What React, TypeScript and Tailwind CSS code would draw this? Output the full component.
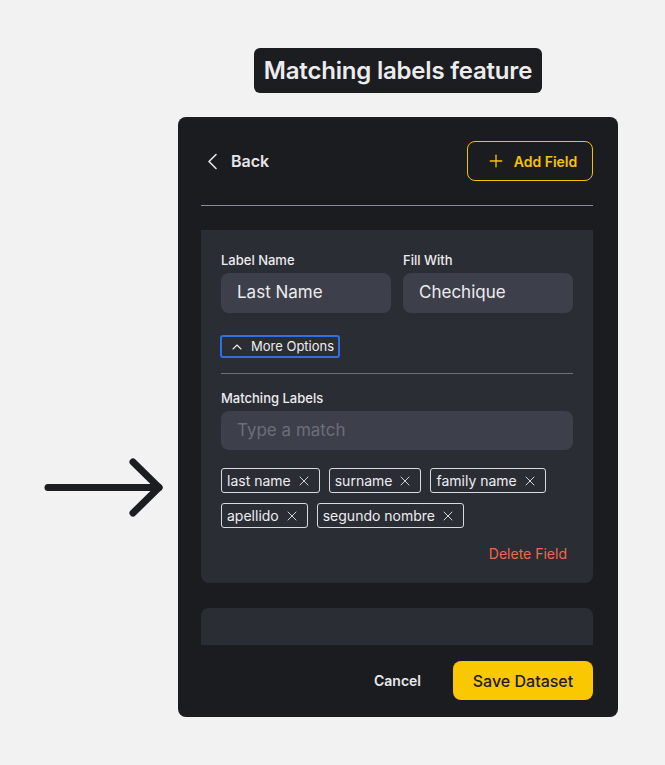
import { ChevronUp, Plus, X } from 'lucide-react';

const tagRows = [
  ['last name', 'surname', 'family name'],
  ['apellido', 'segundo nombre'],
];

function Tag({ label }: { label: string }) {
  return (
    <span className="flex h-[25px] items-center gap-[5px] rounded-[3px] border border-[#d9d9de] pl-[5px] pr-[7px] text-[14px] text-[#eeeef0]">
      {label}
      <X size={16} strokeWidth={1.3} />
    </span>
  );
}

export default function App() {
  return (
    <div
      className="min-h-screen bg-[#f2f2f2] flex items-start pl-[44px] pt-[48px]"
      style={{ fontFamily: 'Inter, "Noto Sans", sans-serif' }}
    >
      <div className="mt-[410px] w-[134px]">
        <svg width="122" height="60" viewBox="0 0 122 60" fill="none">
          <path d="M4 29.5H115" stroke="#1c1d21" strokeWidth="7" strokeLinecap="round" />
          <path d="M89 4L115 29.5L89 55" stroke="#1c1d21" strokeWidth="7" strokeLinecap="round" strokeLinejoin="round" />
        </svg>
      </div>

      <div className="flex flex-col items-center w-[440px]">
        <div className="h-[45px] rounded-md bg-[#1c1d21] px-[10px] flex items-center text-[24px] font-semibold tracking-[-0.2px] text-[#ececee]">
          Matching labels feature
        </div>

        <div className="mt-6 w-[440px] h-[600px] rounded-lg bg-[#1b1c20] pl-[23px] pr-[25px] pt-6 pb-[17px] flex flex-col">
          <div className="flex items-center justify-between h-10">
            <button className="flex items-center gap-[13px] pl-[6px] text-[16px] font-semibold text-[#e6e6ea]">
              <svg width="11" height="17" viewBox="0 0 11 17" fill="none">
                <path d="M9 1.5L2 8.5L9 15.5" stroke="currentColor" strokeWidth="1.6" strokeLinecap="round" strokeLinejoin="round" />
              </svg>
              Back
            </button>
            <button className="flex h-10 w-[126px] items-center justify-center gap-[8px] pl-[3px] rounded-lg border-[1.5px] border-[#f2c200] text-[14px] font-semibold text-[#f5c400]">
              <Plus size={20} strokeWidth={1.6} />
              Add Field
            </button>
          </div>

          <div className="mt-6 h-px bg-[#8b8b9a]" />

          <div className="mt-6 h-[415px] overflow-hidden flex flex-col gap-[25px]">
            <div className="shrink-0 rounded-b-lg bg-[#2b2d35] px-5 pt-[22px] pb-[19px]">
              <div className="grid grid-cols-2 gap-3">
                <div className="flex flex-col gap-[5px]">
                  <span className="text-[13px] font-medium leading-4 text-[#ececf0]">Label Name</span>
                  <div className="h-10 rounded-lg bg-[#3d3f4b] flex items-center px-4 text-[17px] text-[#ececef]">
                    Last Name
                  </div>
                </div>
                <div className="flex flex-col gap-[5px]">
                  <span className="text-[13px] font-medium leading-4 text-[#ececf0]">Fill With</span>
                  <div className="h-10 rounded-lg bg-[#3d3f4b] flex items-center px-4 text-[17px] text-[#ececef]">
                    Chechique
                  </div>
                </div>
              </div>

              <button className="mt-[22px] -ml-px flex h-[23px] items-center gap-[6px] rounded-[3px] border-2 border-[#2f6fe3] pl-[7px] pr-[4px] text-[13px] text-[#eeeef0]">
                <ChevronUp size={16} strokeWidth={1.6} />
                More Options
              </button>

              <div className="mt-[15px] h-px bg-[#6e6f7c]" />

              <div className="mt-4 flex flex-col gap-[5px]">
                <span className="text-[13px] font-medium leading-4 text-[#ececf0]">Matching Labels</span>
                <div className="h-[39px] rounded-lg bg-[#3d3f4b] flex items-center px-4 text-[17px] text-[#6c6e7a]">
                  Type a match
                </div>
              </div>

              <div className="mt-[18px] flex flex-col gap-[10px]">
                {tagRows.map((row, i) => (
                  <div key={i} className="flex gap-[9px]">
                    {row.map((t) => (
                      <Tag key={t} label={t} />
                    ))}
                  </div>
                ))}
              </div>

              <div className="mt-4 flex justify-end pr-[6px]">
                <span className="text-[14px] leading-5 text-[#ea6a4c]">Delete Field</span>
              </div>
            </div>

            <div className="shrink-0 h-[60px] rounded-t-lg bg-[#2b2d35]" />
          </div>

          <div className="mt-4 flex items-center justify-end gap-8">
            <button className="text-[14px] font-semibold text-[#e8e8ec]">Cancel</button>
            <button className="h-[39px] w-[140px] rounded-lg bg-[#fac800] text-[16px] font-medium text-[#1c1c1e]">
              Save Dataset
            </button>
          </div>
        </div>
      </div>
    </div>
  );
}
